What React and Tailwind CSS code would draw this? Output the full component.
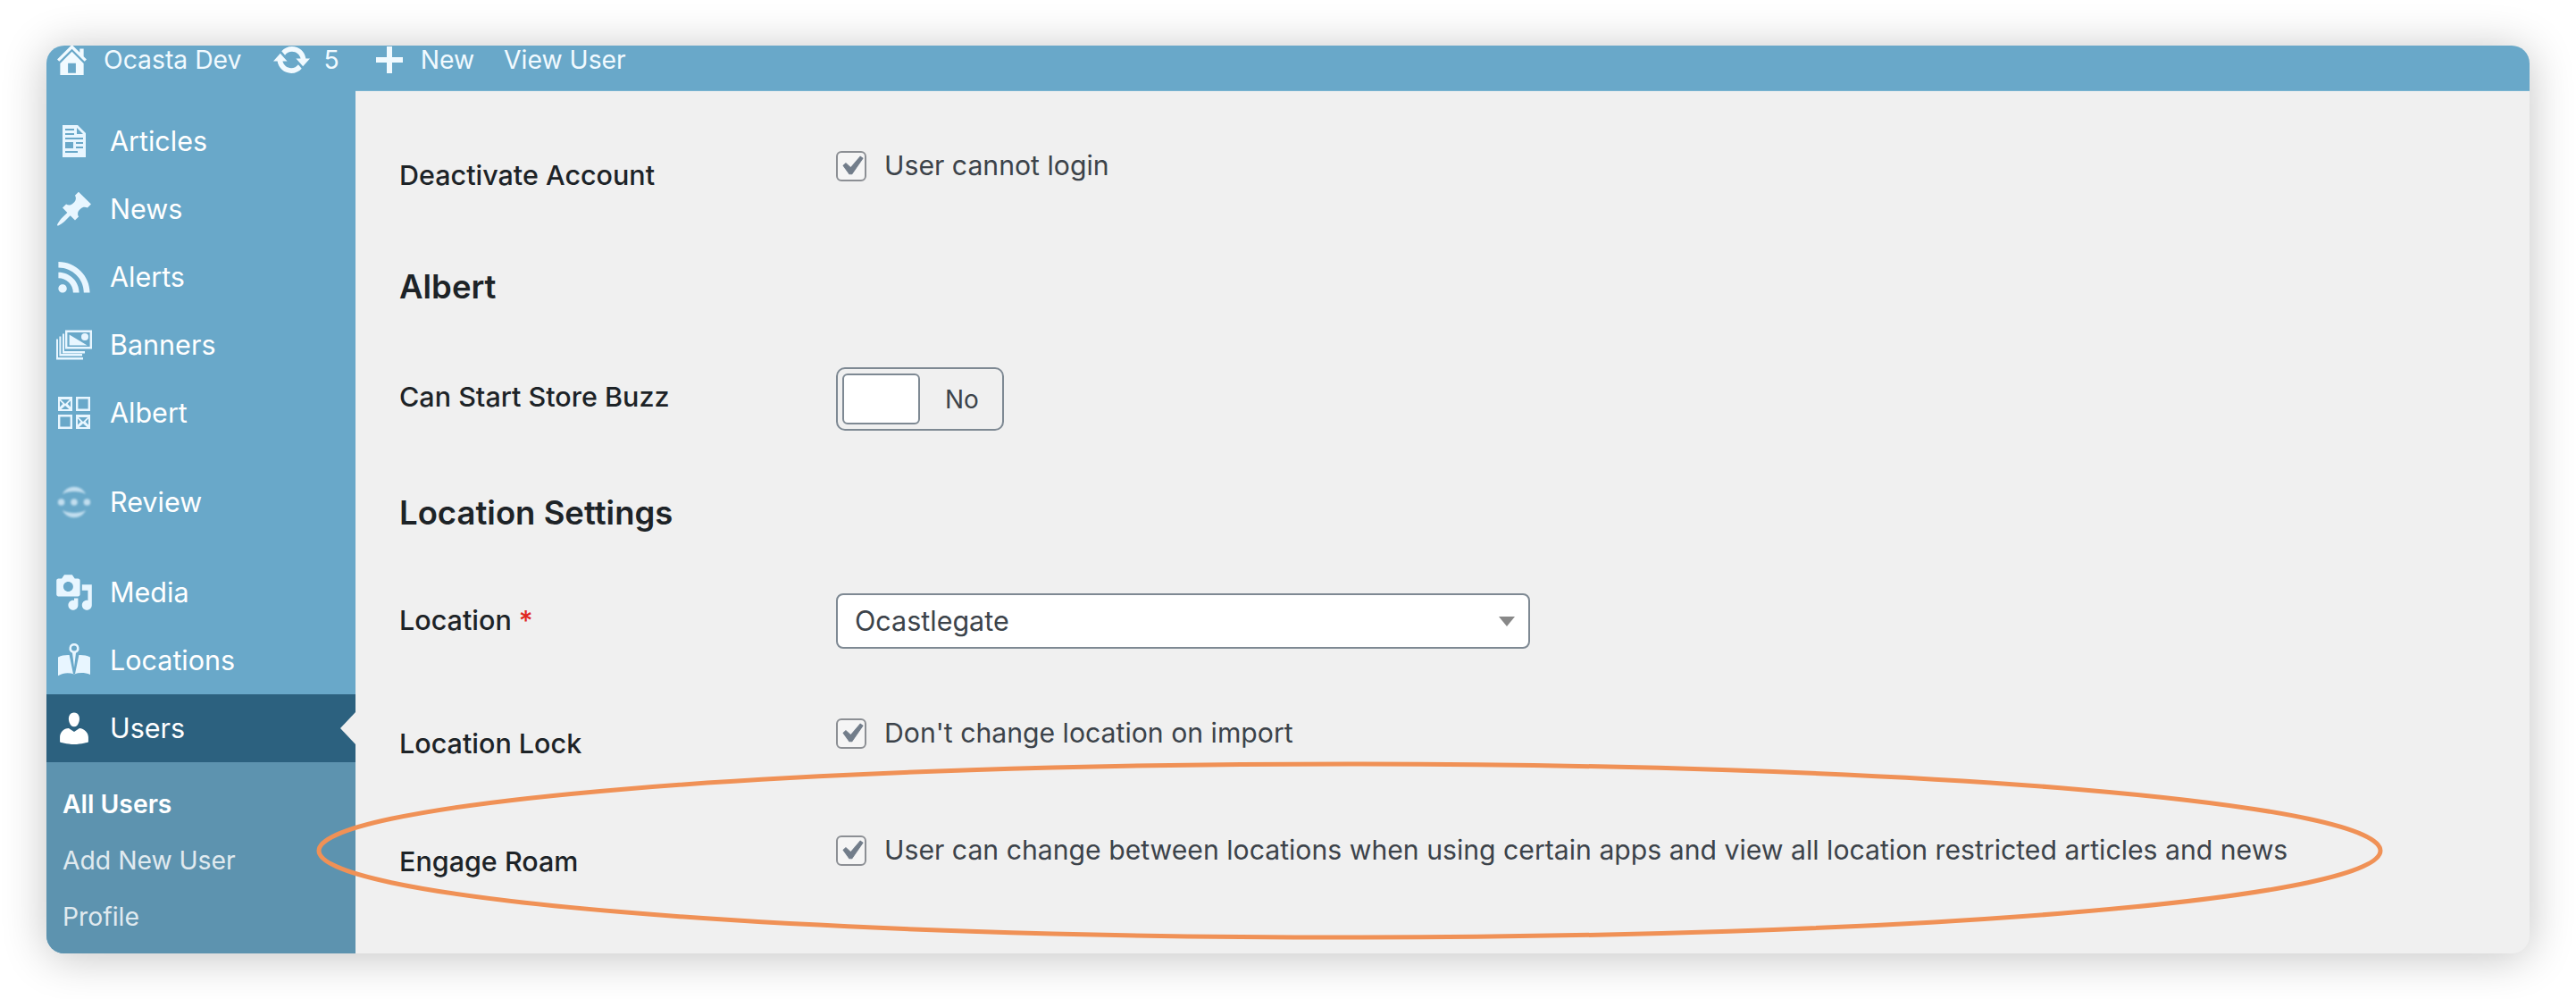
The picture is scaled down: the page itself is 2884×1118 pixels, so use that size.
// Dashicons-style glyphs: the real ones sit on a 20 box, the hand-drawn ones on a 22 box
const ICONS = {
    articles: {
        box: '-1 -1 22 22',
        body: (
            <path fillRule="evenodd" d="M3.500 1h8.500l4.500 4.500V19h-13V1zM5 3v1h5V3H5zm0 2.500v1h5v-1H5zm6.500-3v3.500H15L11.500 2.500zM5 8v1h10V8H5zm0 2.500V14h4.500v-3.500H5zm6 0v1h4v-1h-4zm0 2.500v1h4v-1h-4zM5 15.500v1h7v-1H5z" />
        ),
    },
    news: {
        box: '0 0 20 20',
        body: (
            <path d="M10.440 3.020l1.820-1.820 6.360 6.350-1.830 1.820c-1.050-.680-2.480-.570-3.410.360l-.750.750c-.920.930-1.040 2.350-.350 3.410l-1.830 1.820-2.410-2.410-2.800 2.790c-.420.420-3.380 2.710-3.800 2.290s1.860-3.390 2.280-3.810l2.790-2.790L4.100 9.360l1.830-1.820c1.050.690 2.480.570 3.400-.360l.750-.750c.930-.920 1.050-2.350.360-3.410z" />
        ),
    },
    alerts: {
        box: '0 0 20 20',
        body: (
            <path d="M14.920 18H18C18 9.320 10.820 2.250 2 2.250v3.020c7.120 0 12.920 5.710 12.920 12.730zm-5.440 0h3.080C12.560 12.270 7.820 7.600 2 7.600v3.020c2 0 3.870.770 5.290 2.160C8.700 14.170 9.480 16.030 9.480 18zm-5.350-.020c1.170 0 2.130-.930 2.130-2.090 0-1.150-.960-2.090-2.130-2.090-1.180 0-2.130.940-2.130 2.090 0 1.160.950 2.090 2.130 2.090z" />
        ),
    },
    banners: {
        box: '-1 -1 22 22',
        body: (
            <g transform="translate(0 1.750)">
                <path fillRule="evenodd" d="M5 0h15v10.500H5V0zm1.200 1.200v8.100h12.600V1.200H6.200z" />
                <path d="M7.300 2.500l10 6H7.300z" />
                <circle cx="16" cy="3.800" r="2" />
                <path d="M3.500 2h1v9.800h11.500V13H3.500z" />
                <path d="M1.700 3.500h1v9.800h11.800v1.200H1.700z" />
                <path d="M0 5h1v10.300h14v1.200H0z" />
            </g>
        ),
    },
    albert: {
        box: '-1 -1 22 22',
        body: (
            <g>
                <path fillRule="evenodd" d="M1 1h8v8H1V1zm1.500 1.500l2.500 2.500 2.500-2.500h-5zM2 3.300v3.400L3.700 5 2 3.300zm6 0L6.300 5 8 6.700V3.300zM5 6L2.800 8h4.400L5 6z" />
                <path fillRule="evenodd" d="M11 1h8v8h-8V1zm1.200 1.200v5.600h5.600V2.200h-5.600z" />
                <path fillRule="evenodd" d="M1 11h8v8H1v-8zm1.200 1.200v5.600h5.600v-5.600H2.200z" />
                <path fillRule="evenodd" d="M11 11h8v8h-8v-8zm1.500 1.500l2.500 2.500 2.500-2.500h-5zM12 13.300v3.400l1.700-1.700-1.700-1.700zm6 0L16.300 15l1.700 1.700v-3.400zM15 16l-2.200 2h4.400L15 16z" />
            </g>
        ),
    },
    review: {
        box: '-1 -1 22 22',
        body: (
            <g opacity="0.7">
                <circle cx="2.800" cy="10" r="1.900" />
                <circle cx="10" cy="10" r="1.900" />
                <circle cx="17.200" cy="10" r="1.900" />
                <path d="M3.500 5.500C6 0 14 0 16.500 5.500c-3-2-10-2-13 0z" />
                <path d="M3.500 14.500c2.500 5.500 10.500 5.500 13 0-3 2-10 2-13 0z" />
            </g>
        ),
    },
    media: {
        box: '0 0 20 20',
        body: (
            <path d="M13 11V4c0-.550-.450-1-1-1h-1.670L9 1H5L3.670 3H2c-.550 0-1 .450-1 1v7c0 .550.450 1 1 1h10c.550 0 1-.450 1-1zM7 4.500c1.380 0 2.500 1.120 2.500 2.500S8.380 9.500 7 9.500 4.500 8.380 4.500 7 5.620 4.500 7 4.500zM14 6h5v10.500c0 1.380-1.120 2.500-2.500 2.500S14 17.880 14 16.500s1.120-2.500 2.500-2.500c.170 0 .340.020.500.050V9h-3V6zm-4 8.050V13h2v3.500c0 1.380-1.120 2.500-2.500 2.500S7 17.880 7 16.500 8.120 14 9.500 14c.170 0 .340.020.500.050z" />
        ),
    },
    locations: {
        box: '-1 -1 22 22',
        body: (
            <g>
                <path d="M1 8.200c2-.900 4-1.300 6.300-1.200L9.500 17.600l.5.400.5-.400L12.700 7c2.300-.100 4.300.300 6.300 1.200V18c-3-1.200-6-1.200-9-.300-3-.900-6-.900-9 .900V8.200z" />
                <path fillRule="evenodd" d="M10 0.500a2.800 2.800 0 011 5.400L10 14 9 5.900a2.800 2.800 0 011-5.400zm0 1.300a1.500 1.500 0 100 3 1.500 1.500 0 000-3z" />
            </g>
        ),
    },
    users: {
        box: '0 0 20 20',
        body: (
            <path d="M10 9.250c-2.270 0-2.730-3.440-2.730-3.440C7 4.020 7.820 2 9.970 2c2.160 0 2.980 2.020 2.710 3.810 0 0-.410 3.440-2.680 3.440zm0 2.570L12.720 10c2.390 0 4.520 2.330 4.520 4.530v2.490s-3.650 1.130-7.240 1.130c-3.650 0-7.240-1.130-7.240-1.130v-2.490c0-2.250 1.940-4.480 4.470-4.480z" />
        ),
    },
};

function NavItem({ icon, label, iconClass = 'text-[#e8f6ff]', className = '' }) {
    const { box, body } = ICONS[icon];
    return (
        <div className={`flex items-center h-[76px] pl-[9px] gap-[18px] text-[30.5px] text-white ${className}`}>
            <svg viewBox={box} fill="currentColor" className={`w-[44px] h-[44px] shrink-0 ${iconClass}`}>
                {body}
            </svg>
            <span>{label}</span>
        </div>
    );
}

function Row({ label, required, labelClass = 'pt-[10px]', children, className = '' }) {
    return (
        <div className={`flex ${className}`}>
            <div className={`w-[489px] shrink-0 text-[30.5px] leading-[40px] font-medium text-[#1d2327] ${labelClass}`}>
                {label}
                {required && <span className="text-[#e0281e] ml-2">*</span>}
            </div>
            <div>{children}</div>
        </div>
    );
}

function CheckField({ label }) {
    return (
        <div className="flex items-center h-[40px] gap-[20px] text-[30.2px] text-[#3c434a]">
            <span className="flex items-center justify-center w-[34px] h-[34px] rounded-[6px] border-2 border-[#8c8f94] bg-[#f5f5f5]">
                <svg viewBox="0 0 20 20" fill="#727d8a" stroke="#727d8a" strokeWidth="0.5" className="w-[42px] h-[42px] shrink-0">
                    <path d="M14.830 4.890l1.340.940-5.810 8.380H9.020L5.780 9.670l1.340-1.250 2.570 2.400z" />
                </svg>
            </span>
            <span>{label}</span>
        </div>
    );
}

export default function App() {
    return (
        <div className="h-[1118px] bg-white pt-[51px] pl-[52px] font-['Inter',sans-serif]">
            <div className="relative w-[2780px] h-[1016px] rounded-[20px] overflow-hidden shadow-[0_4px_50px_rgba(0,0,0,0.24)] bg-[#f0f0f0] flex flex-col">
                {/* Top bar */}
                <div className="h-[50px] bg-[#69a8c9] shrink-0 flex items-center pl-3 pb-[18px] text-[28.3px] leading-[32px] text-[#f1faff]">
                    <svg viewBox="2.470 2.500 15.060 15.500" fill="currentColor" className="w-[33px] h-[34px] shrink-0">
                        <path d="M16 8.500l1.530 1.530-1.060 1.060L10 4.620l-6.470 6.470-1.060-1.060L10 2.500l4 4v-2h2v4zm-6-2.460l6 5.990V18H4v-5.970zM12 17v-5H8v5h4z" />
                    </svg>
                    <span className="ml-[19px]">Ocasta Dev</span>
                    <svg viewBox="0.800 3.280 18.400 13.440" fill="currentColor" className="w-[41px] h-[30px] shrink-0 ml-[36px]">
                        <path d="M10.200 3.280c3.530 0 6.430 2.610 6.920 6h2.080l-3.500 4-3.500-4h2.320c-.450-1.970-2.210-3.450-4.320-3.450-1.450 0-2.730.710-3.540 1.780L4.950 5.660C6.230 4.200 8.110 3.280 10.200 3.280zm-.400 13.440c-3.520 0-6.430-2.610-6.920-6H.800l3.500-4c1.170 1.330 2.330 2.670 3.500 4H5.480c.450 1.970 2.210 3.450 4.320 3.450 1.450 0 2.730-.710 3.540-1.780l1.710 1.950c-1.280 1.460-3.150 2.380-5.250 2.380z" />
                    </svg>
                    <span className="ml-[15px]">5</span>
                    <svg viewBox="0 0 30 30" fill="currentColor" className="w-[30px] h-[30px] shrink-0 ml-[41px]">
                        <path d="M12 0h6v12h12v6H18v12h-6V18H0v-6h12z" />
                    </svg>
                    <span className="ml-[20px]">New</span>
                    <span className="ml-[33px]">View User</span>
                </div>

                <div className="flex flex-1 min-h-0">
                    {/* Sidebar */}
                    <div className="w-[346px] shrink-0 bg-[#69a8c9] flex flex-col pt-[19px]">
                        <NavItem icon="articles" label="Articles" />
                        <NavItem icon="news" label="News" />
                        <NavItem icon="alerts" label="Alerts" />
                        <NavItem icon="banners" label="Banners" />
                        <NavItem icon="albert" label="Albert" />
                        <NavItem icon="review" label="Review" iconClass="text-[#e8f6ff] blur-[1px]" className="mt-[24px]" />
                        <NavItem icon="media" label="Media" className="mt-[25px]" />
                        <NavItem icon="locations" label="Locations" />
                        <div className="relative">
                            <NavItem icon="users" label="Users" iconClass="text-white" className="bg-[#2c617f] h-[75px]" />
                            <div className="absolute right-0 top-[20px] w-0 h-0 border-y-[18px] border-y-transparent border-r-[17px] border-r-[#f0f0f0]" />
                        </div>
                        <div className="flex-1 bg-[#5d93af] pt-[29px] pl-[18px] text-[28.3px] leading-[36px] flex flex-col gap-[27px]">
                            <span className="font-semibold text-white">All Users</span>
                            <span className="text-[#e0eaef]">Add New User</span>
                            <span className="text-[#e0eaef]">Profile</span>
                        </div>
                    </div>

                    {/* Form */}
                    <div className="flex-1 pl-[49px] pt-[64px] border-t border-[#78b3d1]">
                        <Row label="Deactivate Account">
                            <CheckField label="User cannot login" />
                        </Row>

                        <h2 className="mt-[83px] text-[36.5px] leading-[44px] font-semibold text-[#1d2327]">Albert</h2>

                        <Row label="Can Start Store Buzz" labelClass="pt-[13px]" className="mt-[68px]">
                            <div className="flex items-center w-[188px] h-[71px] rounded-[10px] border-2 border-[#7e8993] p-[5px] text-[28px] text-[#3c434a]">
                                <span className="w-[87px] h-[57px] bg-white border-2 border-[#7e8993] rounded-[6px]" />
                                <span className="ml-7">No</span>
                            </div>
                        </Row>

                        <h2 className="mt-[70px] text-[36.5px] leading-[44px] font-semibold text-[#1d2327]">Location Settings</h2>

                        <Row label="Location" required className="mt-[68px]">
                            <div className="flex items-center justify-between w-[777px] h-[62px] bg-white rounded-[8px] border-2 border-[#7e8993] pl-[19px] pr-[15px] text-[30.5px] text-[#3c434a]">
                                <span>Ocastlegate</span>
                                <span className="w-0 h-0 border-x-[9px] border-x-transparent border-t-[11px] border-t-[#888888]" />
                            </div>
                        </Row>

                        <Row label="Location Lock" labelClass="pt-[11px]" className="mt-[75px]">
                            <CheckField label="Don't change location on import" />
                        </Row>

                        <Row label="Engage Roam" labelClass="pt-[12px]" className="mt-[80px]">
                            <CheckField label="User can change between locations when using certain apps and view all location restricted articles and news" />
                        </Row>
                    </div>
                </div>

                {/* Hand-drawn highlight over the window */}
                <svg viewBox="0 0 2780 1016" fill="none" className="absolute inset-0 w-[2780px] h-[1016px] pointer-events-none">
                    <ellipse cx="1459" cy="901" rx="1154" ry="97" stroke="#f09156" strokeWidth="5" />
                </svg>
            </div>
        </div>
    );
}
